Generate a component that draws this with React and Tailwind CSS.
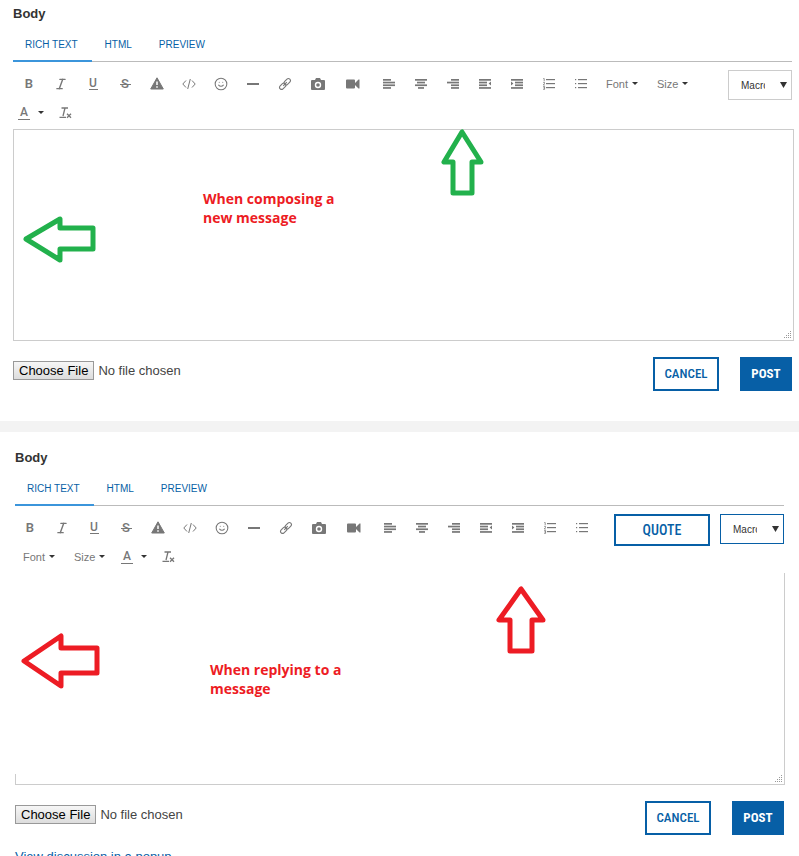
import React from 'react';
import { Italic, Smile } from 'lucide-react';

const BarsIcon = ({ bars, children }) => (
  <svg viewBox="0 0 12 10" className="h-[10px] w-3" fill="currentColor" aria-hidden="true">
    {bars.map(([x, w], idx) => (
      <rect key={idx} x={x} y={idx * 2.7} width={w} height="1.7" />
    ))}
    {children}
  </svg>
);

const ListIcon = ({ numbered }) => (
  <svg viewBox="0 0 12 12" className="h-3 w-3" fill="currentColor" aria-hidden="true">
    {[1, 5, 9].map((y) => (
      <rect key={y} x="3" y={y} width="9" height="1.2" />
    ))}
    {numbered ? (
      <path d="M.3.5h.9v2.7M.2 4.4h1.3v1L.3 7h1.5M.2 8.5h1.4v1.4H.6h1v1.5H.2" fill="none" stroke="currentColor" strokeWidth="0.8" />
    ) : (
      [1, 5, 9].map((y) => <rect key={y} x="0" y={y} width="1.2" height="1.2" />)
    )}
  </svg>
);

const WarningIcon = () => (
  <svg viewBox="0 0 14 13" className="h-[13px] w-[14px]" aria-hidden="true">
    <path d="M7 .8L13.3 12H.7z" fill="currentColor" stroke="currentColor" strokeLinejoin="round" />
    <path d="M7 4.5v3.6M7 9.2v1.5" stroke="#fff" strokeWidth="1.5" />
  </svg>
);

const CodeIcon = () => (
  <svg viewBox="0 0 14 12" className="h-3 w-[14px]" fill="none" stroke="currentColor" strokeWidth="1" aria-hidden="true">
    <path d="M4 2.5L.8 6L4 9.5M10 2.5L13.2 6L10 9.5M8.3 1L5.7 11" />
  </svg>
);

const LinkIcon = () => (
  <svg viewBox="0 0 14 14" className="h-[14px] w-[14px]" fill="none" stroke="currentColor" strokeWidth="1.1" aria-hidden="true">
    <g transform="rotate(-45 7 7)">
      <rect x="0.2" y="5" width="7.2" height="4" rx="2" />
      <rect x="6.6" y="5" width="7.2" height="4" rx="2" />
      <path d="M4.5 7h5" />
    </g>
  </svg>
);

const CameraIcon = () => (
  <svg viewBox="0 0 14 12" className="h-3 w-[14px]" aria-hidden="true">
    <path d="M1 2h3l1-2h4l1 2h3a1 1 0 011 1v8a1 1 0 01-1 1H1a1 1 0 01-1-1V3a1 1 0 011-1z" fill="currentColor" />
    <circle cx="7" cy="7" r="2.5" fill="none" stroke="#fff" strokeWidth="1.4" />
  </svg>
);

const VideoIcon = () => (
  <svg viewBox="0 0 14 10" className="h-[10px] w-[14px]" fill="currentColor" aria-hidden="true">
    <path d="M1 .5h7a1 1 0 011 1V4l3.5-3.5h1v9h-1L9 6v2.5a1 1 0 01-1 1H1a1 1 0 01-1-1v-7a1 1 0 011-1z" />
  </svg>
);

const ClearIcon = () => (
  <svg viewBox="0 0 13 12" className="h-3 w-[13px]" fill="none" stroke="currentColor" strokeWidth="1.3" aria-hidden="true">
    <path d="M2.5 1H9M6 1L4 9M.5 10.3H7M8 6.8l4 4M12 6.8l-4 4" />
  </svg>
);

const Caret = () => (
  <svg viewBox="0 0 6 3" className="mb-px h-[3px] w-[6px] text-[#333]" fill="currentColor" aria-hidden="true">
    <path d="M0 0h6L3 3z" />
  </svg>
);

const tools = [
  { label: 'Bold', icon: <span className="font-['Roboto'] text-[13px] font-semibold">B</span> },
  { label: 'Italic', icon: <Italic className="h-[14px] w-[14px]" strokeWidth={2.4} /> },
  {
    label: 'Underline',
    icon: <span className="w-[9px] border-b border-current text-center font-['Roboto'] text-[12px] font-medium leading-[11px]">U</span>,
  },
  {
    label: 'Strikethrough',
    icon: (
      <span className="relative w-[11px] text-center font-['Roboto'] text-[13px] font-medium">
        S
        <span className="absolute left-0 top-1/2 h-px w-full bg-current" />
      </span>
    ),
  },
  { label: 'Spoiler', icon: <WarningIcon /> },
  { label: 'Code', icon: <CodeIcon /> },
  { label: 'Emoticon', icon: <Smile className="h-[14px] w-[14px]" strokeWidth={1.8} /> },
  { label: 'Horizontal line', icon: <span className="h-[2px] w-3 bg-[#777]" /> },
  { label: 'Link', icon: <LinkIcon /> },
  { label: 'Photo', icon: <CameraIcon />, width: 'w-[34px]' },
  { label: 'Video', icon: <VideoIcon />, width: 'w-9 mr-[2px]' },
  { label: 'Align left', icon: <BarsIcon bars={[[0, 8], [0, 12], [0, 12], [0, 8]]} /> },
  { label: 'Align center', icon: <BarsIcon bars={[[0, 12], [2, 8], [0, 12], [3, 6]]} /> },
  { label: 'Align right', icon: <BarsIcon bars={[[4, 8], [0, 12], [4, 8], [4, 8]]} /> },
  { label: 'Outdent', icon: <BarsIcon bars={[[0, 12], [0, 8], [0, 8], [0, 12]]}><path d="M12 2.5v4l-2.4-2z" /></BarsIcon> },
  { label: 'Indent', icon: <BarsIcon bars={[[0, 12], [4, 8], [4, 8], [0, 12]]}><path d="M0 2.5v4l2.4-2z" /></BarsIcon> },
  { label: 'Numbered list', icon: <ListIcon numbered /> },
  { label: 'Bulleted list', icon: <ListIcon /> },
];

const Toolbar = ({ className = '' }) => (
  <div role="toolbar" aria-label="Formatting" className={`flex min-w-0 flex-1 flex-wrap text-[#777] ${className}`}>
    {tools.map((tool) => (
      <button
        key={tool.label}
        type="button"
        aria-label={tool.label}
        className={`flex h-[29px] items-center justify-center ${tool.width || 'w-8'}`}
      >
        {tool.icon}
      </button>
    ))}
    {['Font', 'Size'].map((name) => (
      <button key={name} type="button" className="flex h-[29px] w-[51px] items-center gap-1 pl-[9px] pt-px text-[11px]">
        {name}
        <Caret />
      </button>
    ))}
    <button type="button" aria-label="Text color" className="flex h-[29px] w-9 items-center gap-2 pl-[5px]">
      <span className="w-3 border-b border-[#777] text-center font-['Roboto'] text-[12px] font-medium leading-[13px]">A</span>
      <Caret />
    </button>
    <button type="button" aria-label="Clear formatting" className="flex h-[29px] w-8 items-center justify-center">
      <ClearIcon />
    </button>
  </div>
);

const MacroSelect = ({ className }) => (
  <div className="relative mt-px w-16 shrink-0">
    <select
      aria-label="Macros"
      className={`h-[30px] w-full appearance-none border bg-white pl-3 pr-[26px] text-[10px] text-[#333] ${className}`}
    >
      <option>Macros</option>
    </select>
    <svg viewBox="0 0 7 6" className="pointer-events-none absolute right-[5px] top-3 h-[6px] w-[7px]" fill="#333" aria-hidden="true">
      <path d="M0 0h7L3.5 6z" />
    </svg>
  </div>
);

const Tabs = () => (
  <div role="tablist" className="mt-[5px] flex h-[34px] gap-px border-b border-[#bbb] text-[10px] text-[#075fa6]">
    {['RICH TEXT', 'HTML', 'PREVIEW'].map((tab, idx) => (
      <button
        key={tab}
        type="button"
        role="tab"
        aria-selected={idx === 0}
        className={`h-[34px] border-b-2 pl-3 pr-[14px] ${idx === 0 ? 'border-[#3b95db]' : 'border-transparent'}`}
      >
        {tab}
      </button>
    ))}
  </div>
);

const Arrow = ({ points, className }) => (
  <svg className={`pointer-events-none absolute overflow-visible ${className}`} fill="none" strokeWidth="5" strokeLinejoin="round" aria-hidden="true">
    <polygon points={points} />
  </svg>
);

const Grip = () => (
  <svg viewBox="0 0 8 8" className="pointer-events-none absolute bottom-[2px] right-[2px] h-2 w-2" fill="#999" shapeRendering="crispEdges" aria-hidden="true">
    {[[6, 0], [4, 2], [6, 2], [2, 4], [4, 4], [6, 4], [0, 6], [2, 6], [4, 6], [6, 6]].map(([x, y]) => (
      <rect key={`${x}-${y}`} x={x} y={y} width="1" height="1" />
    ))}
  </svg>
);

const Note = ({ className, children }) => (
  <p className={`pointer-events-none absolute w-[150px] font-['Open_Sans',sans-serif] text-[14px] font-bold leading-[19px] text-[#ed1c24] ${className}`}>
    {children}
  </p>
);

const Footer = ({ id }) => (
  <div className="mt-4 flex items-start">
    <input
      id={id}
      type="file"
      aria-label="Attachment"
      className="mt-1 min-w-0 flex-1 text-[13px] leading-[17px] text-[#444] file:border file:border-solid file:border-[#999] file:bg-linear-to-b file:from-[#f6f6f6] file:to-[#dddddd] file:px-[5px] file:text-black"
    />
    <button type="button" className="h-[34px] w-[66px] border-2 border-[#075fa6] font-['Roboto_Condensed',Roboto,sans-serif] text-[13px] font-medium text-[#075fa6]">
      CANCEL
    </button>
    <button type="button" className="ml-[21px] h-[34px] w-[52px] bg-[#075fa6] font-['Roboto_Condensed',Roboto,sans-serif] text-[13px] font-bold text-white">
      POST
    </button>
  </div>
);

const App = () => {
  return (
    <main className="h-screen overflow-hidden bg-white font-['Liberation_Sans',Arial,sans-serif] text-[#333]">
      <section className="pb-[30px] pl-[13px] pr-[7px] pt-[5px]">
        <label htmlFor="compose-body" className="block text-[13px] font-bold leading-[18px]">Body</label>
        <Tabs />
        <div className="mt-[7px] flex items-start">
          <Toolbar />
          <MacroSelect className="border-[#ccc]" />
        </div>
        <div className="relative -mr-[2px] mt-[2px]">
          <textarea id="compose-body" className="block h-[212px] w-full resize-none border border-[#ccc]" />
          <Grip />
          <Note className="left-[190px] top-[60px]">When composing a new message</Note>
          {/* toolbar arrow, then left edge arrow */}
          <Arrow className="left-[428px] top-0 h-[68px] w-[44px] stroke-[#22b14c]" points="21,3 3,33 12,33 12,64 31,64 31,33 40,33" />
          <Arrow className="left-[10px] top-[87px] h-[48px] w-[74px] stroke-[#22b14c]" points="3,23 37,3 37,12 70,12 70,33 37,33 37,44" />
        </div>
        <Footer id="compose-file" />
      </section>

      <div className="h-[11px] bg-[#f3f3f3]" />

      <section className="px-[15px] pt-[17px]">
        <label htmlFor="reply-body" className="block text-[13px] font-bold leading-[18px]">Body</label>
        <Tabs />
        <div className="mt-[7px] flex items-start">
          <Toolbar className="-ml-px" />
          <button type="button" className="mr-[10px] mt-px h-8 w-24 shrink-0 border-2 border-[#075fa6] font-['Roboto_Condensed',Roboto,sans-serif] text-[14px] font-medium text-[#075fa6]">
            QUOTE
          </button>
          <MacroSelect className="border-[#075fa6]" />
        </div>
        <div className="relative -mr-px mt-[2px]">
          <textarea id="reply-body" className="block h-[212px] w-full resize-none border-b border-r border-[#ccc]" />
          <span className="absolute bottom-0 left-0 h-[11px] w-px bg-[#ccc]" />
          <Grip />
          <Note className="left-[195px] top-[87px]">When replying to a message</Note>
          <Arrow className="left-[481px] top-[13px] h-[70px] w-[52px] stroke-[#ed1c24]" points="25,3 3,34 14,34 14,65 36,65 36,34 47,34" />
          <Arrow className="left-[6px] top-[60px] h-[56px] w-[80px] stroke-[#ed1c24]" points="3,28 40,3 40,15 76,15 76,40 40,40 40,53" />
        </div>
        <Footer id="reply-file" />
        <a href="#popup" className="mt-[13px] block text-[13px] leading-[18px] text-[#075fa6]">View discussion in a popup</a>
      </section>
    </main>
  );
};

export default App;
